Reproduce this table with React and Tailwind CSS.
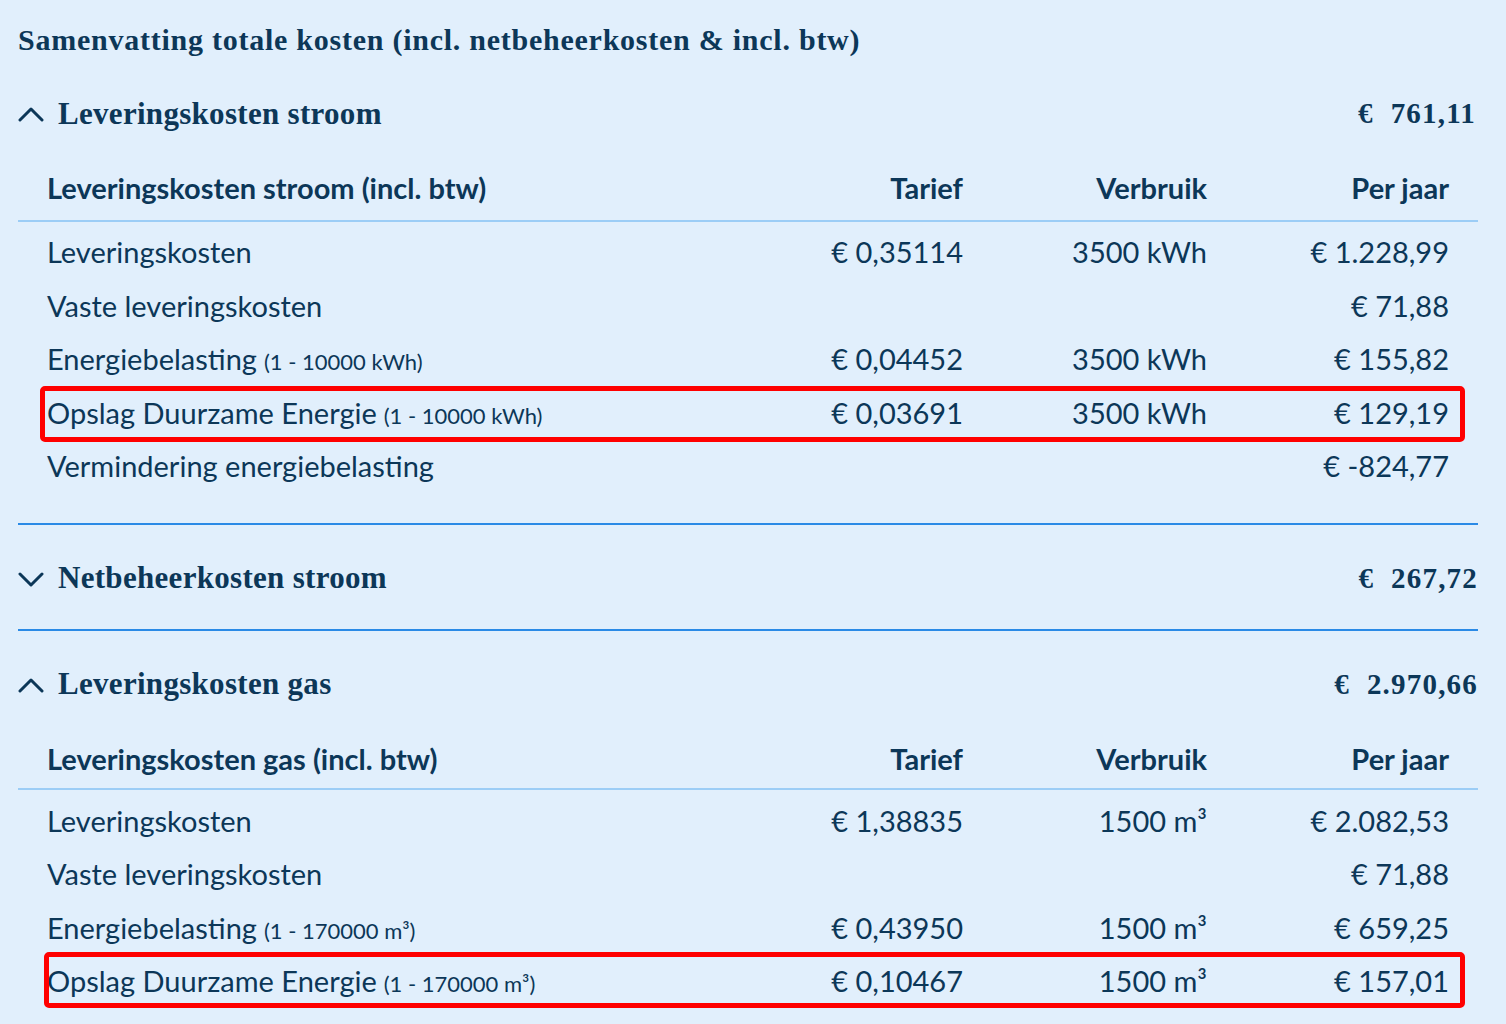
import React from 'react';

const serif = { fontFamily: '"Liberation Serif", "DejaVu Serif", serif' };

const Chevron = ({ up }) => (
  <svg width="26" height="18" viewBox="0 0 26 18" className="shrink-0">
    <polyline
      points={up ? '2,15 13,4 24,15' : '2,4 13,15 24,4'}
      fill="none"
      stroke="#0c3758"
      strokeWidth="3"
      strokeLinecap="round"
      strokeLinejoin="round"
    />
  </svg>
);

const SectionHeader = ({ title, amount, open, amountClass = '' }) => (
  <div className="h-[104px] pt-[4px] flex items-center justify-between">
    <div className="flex items-center gap-[14px]">
      <Chevron up={open} />
      <span className="text-[31px] font-bold tracking-[0.3px]" style={serif}>{title}</span>
    </div>
    <span className={`text-[29px] font-bold tracking-[1.2px] whitespace-pre ${amountClass}`} style={serif}>{amount}</span>
  </div>
);

const Row = ({ label, note, tarief, verbruik, perJaar, highlight }) => (
  <div className="relative h-[53.5px] grid grid-cols-[1fr_200px_244px_242px] items-center px-[29px]">
    <div className="whitespace-nowrap">
      {label}
      {note && <span className="text-[22px] ml-[7px]">{note}</span>}
    </div>
    <div className="text-right">{tarief}</div>
    <div className="text-right">{verbruik}</div>
    <div className="text-right">{perJaar}</div>
    {highlight && (
      <div className={`absolute ${highlight} right-[13px] border-[5px] border-[#ff0000] rounded-[5px] pointer-events-none`} />
    )}
  </div>
);

const Table = ({ title, rows, lineClass, rowsClass }) => (
  <div className="text-[29px]">
    <div className={`grid grid-cols-[1fr_200px_244px_242px] items-center px-[29px] font-bold border-b-2 border-[#9ccdf6] ${lineClass}`}>
      <div>{title}</div>
      <div className="text-right">Tarief</div>
      <div className="text-right">Verbruik</div>
      <div className="text-right">Per jaar</div>
    </div>
    <div className={rowsClass}>
      {rows.map((r, i) => (
        <Row key={i} {...r} />
      ))}
    </div>
  </div>
);

export default function App() {
  const stroomRows = [
    { label: 'Leveringskosten', tarief: '€ 0,35114', verbruik: '3500 kWh', perJaar: '€ 1.228,99' },
    { label: 'Vaste leveringskosten', perJaar: '€ 71,88' },
    { label: 'Energiebelasting', note: '(1 - 10000 kWh)', tarief: '€ 0,04452', verbruik: '3500 kWh', perJaar: '€ 155,82' },
    {
      label: 'Opslag Duurzame Energie',
      note: '(1 - 10000 kWh)',
      tarief: '€ 0,03691',
      verbruik: '3500 kWh',
      perJaar: '€ 129,19',
      highlight: 'left-[22px] top-0 -bottom-[3px]',
    },
    { label: 'Vermindering energiebelasting', perJaar: '€ -824,77' },
  ];

  const gasRows = [
    { label: 'Leveringskosten', tarief: '€ 1,38835', verbruik: '1500 m³', perJaar: '€ 2.082,53' },
    { label: 'Vaste leveringskosten', perJaar: '€ 71,88' },
    { label: 'Energiebelasting', note: '(1 - 170000 m³)', tarief: '€ 0,43950', verbruik: '1500 m³', perJaar: '€ 659,25' },
    {
      label: 'Opslag Duurzame Energie',
      note: '(1 - 170000 m³)',
      tarief: '€ 0,10467',
      verbruik: '1500 m³',
      perJaar: '€ 157,01',
      highlight: 'left-[26px] -top-[2px] bottom-0',
    },
  ];

  return (
    <div
      className="min-h-screen w-full bg-[#e1effc] text-[#0c3758] pl-[18px] pr-[28px] overflow-hidden"
      style={{ fontFamily: 'Lato, "Noto Sans", sans-serif' }}
    >
      <h1 className="pt-[20px] leading-[40px] text-[30px] font-bold tracking-[0.75px]" style={serif}>
        Samenvatting totale kosten (incl. netbeheerkosten &amp; incl. btw)
      </h1>

      {/* Stroom levering */}
      <SectionHeader title="Leveringskosten stroom" amount="€  761,11" open amountClass="mr-[2px]" />
      <Table
        title="Leveringskosten stroom (incl. btw)"
        rows={stroomRows}
        lineClass="h-[58px] pb-[8px]"
        rowsClass="pt-[3px]"
      />
      <div className="h-[30px]" />

      {/* Netbeheer */}
      <div className="border-t-2 border-[#2a8ae6]">
        <SectionHeader title="Netbeheerkosten stroom" amount="€  267,72" />
      </div>

      {/* Gas levering */}
      <div className="border-t-2 border-[#2a8ae6]">
        <SectionHeader title="Leveringskosten gas" amount="€  2.970,66" open />
        <Table
          title="Leveringskosten gas (incl. btw)"
          rows={gasRows}
          lineClass="h-[55px] pb-[4px]"
          rowsClass="pt-[4px]"
        />
      </div>
    </div>
  );
}
